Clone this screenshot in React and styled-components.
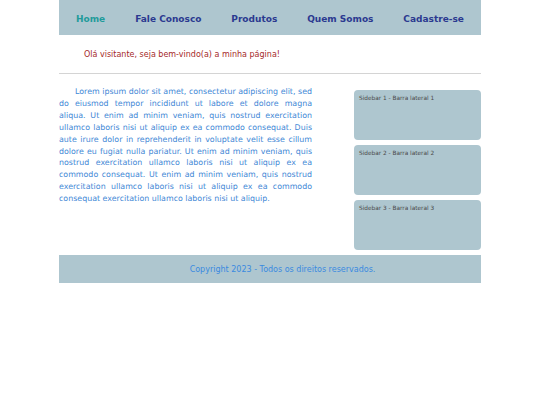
import React from "react";
import styled, { createGlobalStyle } from "styled-components";

const Global = createGlobalStyle`
  html, body { margin: 0; padding: 0; background: #fff; }
  body { font-family: "DejaVu Sans", Verdana, sans-serif; }
`;

const Page = styled.div`
  width: 422px;
  margin: 0 auto;
`;

const Nav = styled.nav`
  height: 35px;
  background: #aec6cf;
  display: flex;
  align-items: center;
  justify-content: space-between;
  padding: 2px 17px 0;
  box-sizing: border-box;
`;

const NavLink = styled.a`
  font-size: 9px;
  font-weight: bold;
  text-decoration: none;
  color: ${(p) => (p.$active ? "#1f9b9b" : "#2b3990")};
`;

const Greeting = styled.p`
  margin: 0;
  height: 38px;
  padding-left: 25px;
  display: flex;
  align-items: center;
  font-size: 8px;
  color: #a52a2a;
  border-bottom: 1px solid #d4d4d4;
`;

const Main = styled.main`
  display: flex;
  justify-content: space-between;
  padding-top: 12px;
`;

const Article = styled.p`
  width: 253px;
  margin: 0;
  font-size: 7.9px;
  line-height: 11.9px;
  text-align: justify;
  text-indent: 16px;
  color: #3f88d6;
`;

const Aside = styled.aside`
  width: 127px;
  display: flex;
  flex-direction: column;
  gap: 5px;
  padding-top: 4px;
`;

const SideBox = styled.div`
  height: 50px;
  background: #aec6cf;
  border-radius: 4px;
  padding: 5px 5px;
  box-sizing: border-box;
  font-size: 5.8px;
  color: #4a4a4a;
`;

const Footer = styled.footer`
  margin-top: 5px;
  height: 28px;
  background: #aec6cf;
  display: flex;
  align-items: center;
  justify-content: center;
  padding-left: 25px;
  font-size: 8px;
  color: #3a8ae0;
`;

const links = ["Home", "Fale Conosco", "Produtos", "Quem Somos", "Cadastre-se"];

export default function App() {
  return (
    <>
      <Global />
      <Page>
        <Nav>
          {links.map((l, i) => (
            <NavLink key={l} href="#" $active={i === 0}>
              {l}
            </NavLink>
          ))}
        </Nav>
        <Greeting>Olá visitante, seja bem-vindo(a) a minha página!</Greeting>
        <Main>
          <Article>
            Lorem ipsum dolor sit amet, consectetur adipiscing elit, sed do eiusmod tempor
            incididunt ut labore et dolore magna aliqua. Ut enim ad minim veniam, quis nostrud
            exercitation ullamco laboris nisi ut aliquip ex ea commodo consequat. Duis aute irure
            dolor in reprehenderit in voluptate velit esse cillum dolore eu fugiat nulla pariatur.
            Ut enim ad minim veniam, quis nostrud exercitation ullamco laboris nisi ut aliquip ex
            ea commodo consequat. Ut enim ad minim veniam, quis nostrud exercitation ullamco
            laboris nisi ut aliquip ex ea commodo consequat exercitation ullamco laboris nisi ut
            aliquip.
          </Article>
          <Aside>
            <SideBox>Sidebar 1 - Barra lateral 1</SideBox>
            <SideBox>Sidebar 2 - Barra lateral 2</SideBox>
            <SideBox>Sidebar 3 - Barra lateral 3</SideBox>
          </Aside>
        </Main>
        <Footer>Copyright 2023 - Todos os direitos reservados.</Footer>
      </Page>
    </>
  );
}
